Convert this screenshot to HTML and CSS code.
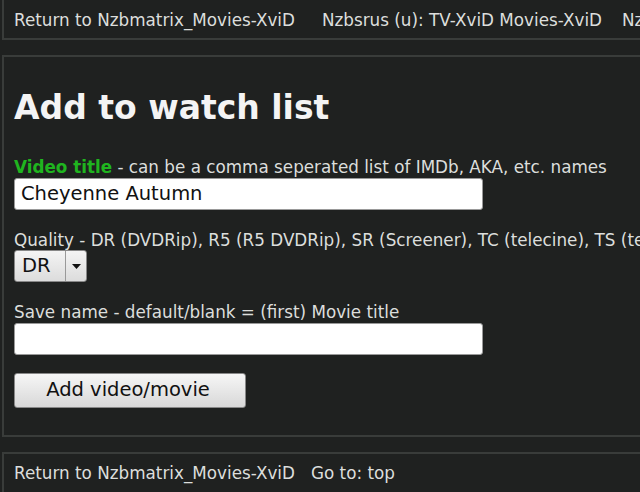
FILE: index.html
```html
<!DOCTYPE html>
<html>
<head>
<meta charset="utf-8">
<link rel="stylesheet" href="styles.css">
</head>
<body>
<div class="box nav">
  <a class="link">Return to Nzbmatrix_Movies-XviD</a>
  <span class="gap"></span>
  <a class="link">Nzbsrus (u): TV-XviD Movies-XviD</a>
  <span class="gap two"></span>
  <a class="link">Nzbindex</a>
</div>
<div class="box main">
  <h1 class="title">Add to watch list</h1>
  <div class="field">
    <div class="label"><span class="hl">Video title</span> - can be a comma seperated list of IMDb, AKA, etc. names</div>
    <div class="input">Cheyenne Autumn</div>
  </div>
  <div class="field">
    <div class="label">Quality - DR (DVDRip), R5 (R5 DVDRip), SR (Screener), TC (telecine), TS (telesync)</div>
    <div class="select"><span class="sel-val">DR</span><span class="sel-arrow"><svg width="9" height="5" viewBox="0 0 9 5"><path d="M0 0H9L4.5 5Z" fill="#111"/></svg></span></div>
  </div>
  <div class="field">
    <div class="label">Save name - default/blank = (first) Movie title</div>
    <div class="input"></div>
  </div>
  <div class="button">Add video/movie</div>
</div>
<div class="box nav foot">
  <a class="link">Return to Nzbmatrix_Movies-XviD</a>
  <span class="gap small"></span>
  <a class="link">Go to: top</a>
</div>
</body>
</html>
```
FILE: styles.css
```css
html, body {
  margin: 0;
  padding: 0;
  background: #1f2120;
  width: 640px;
  height: 492px;
  overflow: hidden;
}
body {
  font-family: "DejaVu Sans", sans-serif;
  font-size: 16.8px;
  color: #dcdedc;
  padding-left: 2px;
}
.box {
  border: 2px solid #393c3a;
  border-right: none;
  background: #1f2120;
  overflow: hidden;
}
.nav {
  display: flex;
  white-space: nowrap;
  padding: 10px 0 0 10px;
  box-sizing: border-box;
  border-top: none;
  height: 40px;
}
.link { color: #dcdedc; }
.gap { display: inline-block; width: 27px; flex: none; }
.gap.two { width: 20px; }
.gap.small { width: 16px; }
.main {
  margin-top: 15px;
  padding: 18px 0 0 10px;
  height: 382px;
  box-sizing: border-box;
}
.title {
  margin: 13px 0 29px;
  font-size: 33px;
  font-weight: bold;
  color: #f4f4f4;
  line-height: 40px;
}
.field { margin-bottom: 20px; }
.label {
  white-space: nowrap;
  line-height: 20px;
}
.hl { color: #1fb51f; font-weight: bold; }
.input {
  margin-top: 1px;
  width: 469px;
  height: 32px;
  box-sizing: border-box;
  background: #fff;
  border-radius: 3px;
  border: 1px solid #999;
  color: #111;
  font-size: 19.5px;
  padding: 3px 0 0 6px;
}
.select {
  display: flex;
  width: 73px;
  height: 32px;
  box-sizing: border-box;
  border-radius: 3px;
  border: 1px solid #888;
  background: linear-gradient(#f4f4f4, #dcdcdc);
  color: #111;
  font-size: 19.5px;
}
.sel-val {
  width: 51px;
  padding: 3px 0 0 7px;
  box-sizing: border-box;
  border-right: 1px solid #999;
}
.sel-arrow {
  flex: 1;
  display: flex;
  align-items: center;
  justify-content: center;
}
.button {
  margin-top: -2px;
  width: 232px;
  height: 35px;
  box-sizing: border-box;
  border-radius: 3px;
  border: 1px solid #888;
  background: linear-gradient(#f6f6f6, #d8d8d8);
  color: #111;
  font-size: 19.5px;
  text-align: center;
  line-height: 32px;
  padding-right: 4px;
}
.foot {
  margin-top: 15px;
  border-top: 2px solid #393c3a;
  border-bottom: none;
  padding-top: 9px;
}
```
